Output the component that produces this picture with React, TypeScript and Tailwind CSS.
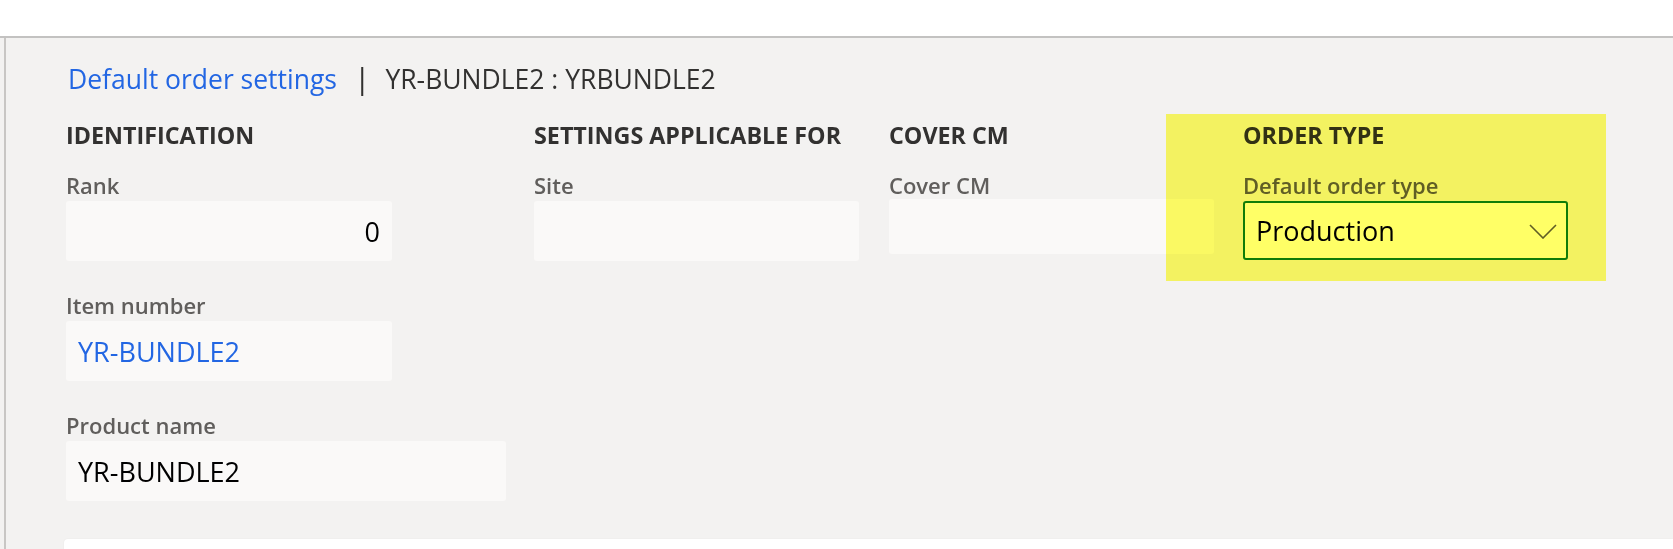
import { ReactNode } from 'react'

function Field({
  label,
  children,
  className = '',
}: {
  label: string
  children?: ReactNode
  className?: string
}) {
  return (
    <div className={`flex flex-col ${className}`}>
      <div className="h-[28px] text-[22px] leading-[24px] font-semibold text-[#605e5c] whitespace-nowrap">
        {label}
      </div>
      {children}
    </div>
  )
}

function Input({ value, align = 'left', color = 'text-[#000000]', width = 'w-[326px]' }: { value?: string; align?: 'left' | 'right'; color?: string; width?: string }) {
  return (
    <div
      className={`${width} h-[60px] rounded-[3px] bg-[#faf9f8] flex items-center px-[12px] pt-[2px] text-[27px] ${color} ${
        align === 'right' ? 'justify-end' : ''
      }`}
    >
      {value}
    </div>
  )
}

function Heading({ children }: { children: ReactNode }) {
  return (
    <div className="h-[23px] text-[23.3px] leading-[23px] font-bold text-[#323130] whitespace-nowrap">{children}</div>
  )
}

export default function App() {
  return (
    <div className="w-[1673px] h-[549px] overflow-hidden bg-white font-['Open_Sans',sans-serif]">
      {/* top command area */}
      <div className="h-[38px] bg-white border-b-2 border-[#c3c2c1]" />

      <div className="relative flex h-[511px] bg-[#f3f2f1]">
        <div className="w-[4px] shrink-0" />
        <div className="w-[2px] shrink-0 bg-[#c8c6c4]" />

        <div className="flex-1 pl-[62px] pt-[26px]">
          {/* title */}
          <div className="flex items-baseline h-[28px] text-[26.5px] leading-[28px] font-normal whitespace-nowrap">
            <span className="text-[#2266e3]">Default order settings</span>
            <span className="ml-[17px] mr-[15px] text-[30px] leading-[28px] text-[#323130]">|</span>
            <span className="text-[#323130]">YR-BUNDLE2 : YRBUNDLE2</span>
          </div>

          {/* sections */}
          <div className="-ml-[2px] grid grid-cols-[468px_355px_354px_1fr] mt-[32px]">
            <div className="flex flex-col">
              <Heading>IDENTIFICATION</Heading>
              <Field label="Rank" className="mt-[26px]">
                <Input value="0" align="right" />
              </Field>
              <Field label="Item number" className="mt-[32px]">
                <Input value="YR-BUNDLE2" color="text-[#2266e3]" />
              </Field>
              <Field label="Product name" className="mt-[32px]">
                <Input value="YR-BUNDLE2" width="w-[440px]" />
              </Field>
            </div>

            <div className="flex flex-col">
              <Heading>SETTINGS APPLICABLE FOR</Heading>
              <Field label="Site" className="mt-[26px]">
                <Input width="w-[325px]" />
              </Field>
            </div>

            <div className="flex flex-col">
              <Heading>COVER CM</Heading>
              <Field label="Cover CM" className="mt-[26px]">
                <div className="w-[325px] h-[55px] -mt-[2px] rounded-[3px] bg-[#faf9f8]" />
              </Field>
            </div>

            <div className="flex flex-col">
              <Heading>ORDER TYPE</Heading>
              <Field label="Default order type" className="mt-[26px]">
                <div className="w-[325px] h-[59px] rounded-[3px] border-2 border-[#107c10] bg-white flex items-center justify-between pl-[11px] pr-[9px] pt-[2px]">
                  <span className="text-[27px] text-[#000000]">Production</span>
                  <svg width="28" height="15" viewBox="0 0 28 15" fill="none">
                    <path d="M1 1 L14 14 L27 1" stroke="#605e5c" strokeWidth="1.6" />
                  </svg>
                </div>
              </Field>
            </div>
          </div>

          {/* next card */}
          <div className="mt-[38px] -ml-[4px] h-[40px] rounded-tl-[4px] bg-white shadow-[0_0_2px_rgba(0,0,0,0.06)]" />
        </div>

        {/* highlighter mark */}
        <div className="absolute left-[1166px] top-[76px] w-[440px] h-[167px] bg-[#ffff66] mix-blend-multiply pointer-events-none" />
      </div>
    </div>
  )
}
